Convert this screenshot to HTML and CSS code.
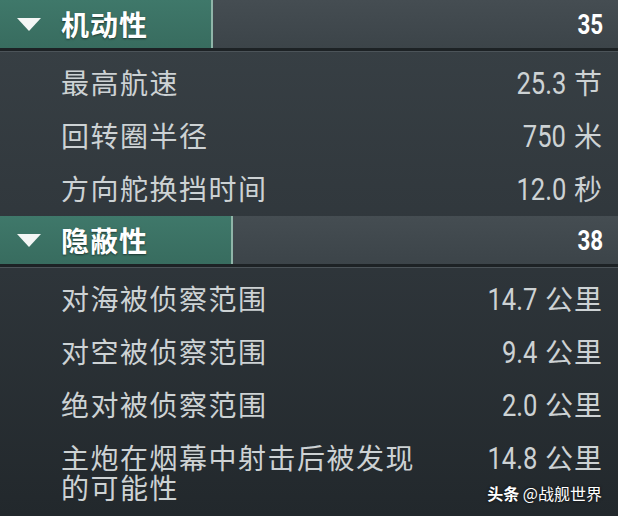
FILE: index.html
```html
<!DOCTYPE html>
<html lang="zh">
<head>
    <meta charset="UTF-8">
    <meta name="viewport" content="width=device-width, initial-scale=1.0">
    <title>战舰属性</title>
    <link rel="stylesheet" href="styles.css">
</head>
<body>
    <div class="panel">
        <section class="group">
            <div class="group-head">
                <div class="head-tab tab-mobility">
                    <span class="caret"></span>
                    <span class="head-title">机动性</span>
                </div>
                <span class="head-score"><span class="num">35</span></span>
            </div>
            <ul class="stats">
                <li class="stat"><span class="stat-name">最高航速</span><span class="stat-value"><span class="num">25.3</span> <span class="unit">节</span></span></li>
                <li class="stat"><span class="stat-name">回转圈半径</span><span class="stat-value"><span class="num">750</span> <span class="unit">米</span></span></li>
                <li class="stat"><span class="stat-name">方向舵换挡时间</span><span class="stat-value"><span class="num">12.0</span> <span class="unit">秒</span></span></li>
            </ul>
        </section>

        <section class="group">
            <div class="group-head">
                <div class="head-tab tab-stealth">
                    <span class="caret"></span>
                    <span class="head-title">隐蔽性</span>
                </div>
                <span class="head-score"><span class="num">38</span></span>
            </div>
            <ul class="stats">
                <li class="stat"><span class="stat-name">对海被侦察范围</span><span class="stat-value"><span class="num">14.7</span> <span class="unit">公里</span></span></li>
                <li class="stat"><span class="stat-name">对空被侦察范围</span><span class="stat-value"><span class="num">9.4</span> <span class="unit">公里</span></span></li>
                <li class="stat"><span class="stat-name">绝对被侦察范围</span><span class="stat-value"><span class="num">2.0</span> <span class="unit">公里</span></span></li>
                <li class="stat"><span class="stat-name">主炮在烟幕中射击后被发现<br>的可能性</span><span class="stat-value"><span class="num">14.8</span> <span class="unit">公里</span></span></li>
            </ul>
        </section>

        <div class="watermark"><b>头条</b> @战舰世界</div>
    </div>
</body>
</html>
```

FILE: styles.css
```css
body {
    margin: 0;
    padding: 0;
    background-color: #22282c;
    font-family: "Noto Sans CJK SC", "Noto Sans", sans-serif;
}

.panel {
    position: relative;
    width: 618px;
    height: 516px;
    overflow: hidden;
    background: linear-gradient(180deg, #394146 0%, #30373c 45%, #22282c 100%);
}

.group + .group {
    margin-top: 1px;
}

/* cabecera de cada grupo */
.group-head {
    display: flex;
    align-items: center;
    height: 48px;
    background: linear-gradient(180deg, #454d52, #3c4449);
    border-bottom: 3px solid #1d2225;
    box-shadow: 0 1px 0 #4c5459;
}

.head-tab {
    display: flex;
    align-items: center;
    height: 100%;
    background: linear-gradient(180deg, #3f786a, #386c5f);
    border-right: 2px solid #8fb5a8;
}

.tab-mobility {
    width: 211px;
}

.tab-stealth {
    width: 231px;
}

.caret {
    width: 0;
    height: 0;
    margin-left: 17px;
    border-left: 12px solid transparent;
    border-right: 12px solid transparent;
    border-top: 13px solid #f4f6f5;
}

.head-title {
    margin-left: 20px;
    font-size: 28px;
    font-weight: bold;
    letter-spacing: 1px;
    color: #ffffff;
    text-shadow: 0 1px 2px rgba(0, 0, 0, 0.5);
}

.head-score {
    margin-left: auto;
    padding-right: 15px;
    font-family: "Roboto", sans-serif;
    font-size: 28px;
    font-weight: bold;
    color: #ffffff;
}

/* numeros estrechos */
.num {
    display: inline-block;
    transform: scaleX(0.8);
    transform-origin: right center;
}

/* filas de datos */
.stats {
    list-style: none;
    margin: 0;
    padding: 5px 0 0;
}

.stat {
    display: flex;
    align-items: flex-start;
    padding: 11px 15px 11px 61px;
    line-height: 30px;
    color: #cdd2d4;
}

.stat-name {
    font-size: 28px;
    letter-spacing: 1.5px;
    line-height: 30px;
}

.stat-value {
    margin-left: auto;
    font-family: "Roboto", sans-serif;
    font-size: 32px;
    white-space: nowrap;
}

.unit {
    font-family: "Noto Sans CJK SC", sans-serif;
    font-size: 28px;
    letter-spacing: 1px;
}

.watermark {
    position: absolute;
    right: 16px;
    bottom: 11px;
    font-size: 16px;
    color: #ffffff;
    text-shadow: 0 0 3px rgba(0, 0, 0, 0.8);
}
```
